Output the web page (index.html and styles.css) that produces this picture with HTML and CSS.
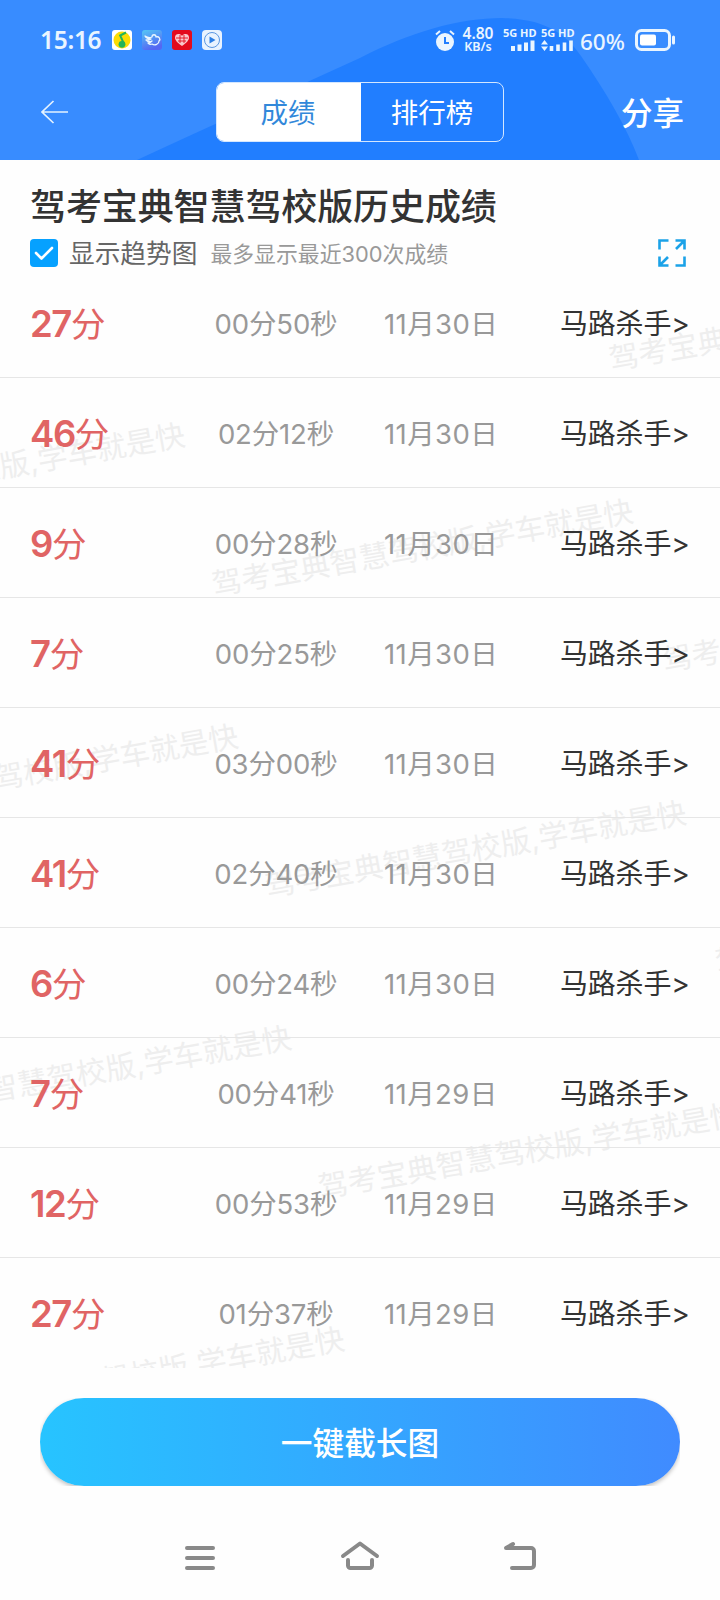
FILE: index.html
```html
<!DOCTYPE html>
<html lang="zh-CN">
<head>
<meta charset="utf-8">
<title>历史成绩</title>
<link rel="stylesheet" href="styles.css">
</head>
<body>
<header class="header">
  <svg class="header-bg" width="720" height="160" viewBox="0 0 720 160"><path d="M137 160 C215 124 290 90 360 58 C410 32 460 18 502 18 C546 19 566 34 581 56 C606 92 627 128 639 160Z" fill="#217eff"/></svg>
  <div class="status">
    <span class="clock">15:16</span>
    <div class="apps">
      <svg width="20" height="20" viewBox="0 0 20 20"><rect width="20" height="20" rx="3" fill="#fff"/><circle cx="10" cy="10" r="8.500" fill="#fbdc05"/><circle cx="10" cy="14.300" r="3.400" fill="#22b45a"/><path d="M12 14 8.200 5.500 14 2.500" fill="none" stroke="#22b45a" stroke-width="2"/></svg>
      <svg width="20" height="20" viewBox="0 0 20 20"><defs><linearGradient id="sky" x1="0" y1="0" x2=".4" y2="1"><stop stop-color="#55c7f5"/><stop offset="1" stop-color="#5467f3"/></linearGradient></defs><rect width="20" height="20" rx="3" fill="url(#sky)"/><path d="M3 6c3 2 5 2 7 1 0-3 4-3 4 0 3-1 5 2 3 4 0 3-4 5-7 3-2 1-3 0-4-1 2 0 3-1 4-2-2 1-4 1-6-1 2 0 4 0 5-1-3 0-5-1-6-3Z" fill="none" stroke="#e9f5ff" stroke-width="1.300" stroke-linejoin="round"/></svg>
      <svg width="20" height="20" viewBox="0 0 20 20"><rect width="20" height="20" rx="3" fill="#e30b1c"/><path d="M10 16C5 12.500 3 10 3 7.500 3 3.500 8 3 10 6c2-3 7-2.500 7 1.500 0 2.500-2 5-7 8.500Z" fill="#f9c9cc"/><path d="M4 8h12M6 11h8M8 5v8M12 5v8" stroke="#e30b1c" stroke-width=".9"/></svg>
      <svg width="20" height="20" viewBox="0 0 20 20"><rect width="20" height="20" rx="4" fill="#e9f3ff"/><circle cx="10" cy="10" r="7.500" fill="none" stroke="#5b97e2" stroke-width="1"/><path d="M7.500 6.500v7l6-3.500z" fill="#2d7fe6"/></svg>
    </div>
    <svg class="alarm" width="20" height="22" viewBox="0 0 20 22"><circle cx="10" cy="12" r="9" fill="#eaf5ff"/><path d="M1 4.500 5 1M19 4.500 15 1" stroke="#eaf5ff" stroke-width="2"/><path d="M10 7v6h4" fill="none" stroke="#217eff" stroke-width="2"/></svg>
    <div class="speed"><span>4.80</span><span class="unit">KB/s</span></div>
    <div class="net"><span>5G HD</span><svg width="32" height="11" viewBox="0 0 32 11"><path d="M10 11V6M16.500 11V4.500M23 11V2.500M29.500 11V.5" stroke="#eaf5ff" stroke-width="4"/></svg></div>
    <div class="net net2"><span>5G HD</span><svg width="32" height="11" viewBox="0 0 32 11"><path d="M0 4.500 3.500 0 7 4.500zM0 6.500 3.500 11 7 6.500z" fill="#eaf5ff"/><path d="M10.500 11V6M17 11V4.500M23.500 11V2.500M30 11V.5" stroke="#eaf5ff" stroke-width="3.600"/></svg></div>
    <span class="percent">60%</span>
    <svg class="battery" width="41" height="22" viewBox="0 0 41 22"><rect x="1.500" y="1.500" width="33" height="19" rx="5" fill="none" stroke="#eaf5ff" stroke-width="3"/><rect x="5" y="5.500" width="16" height="11" rx="2" fill="#fff"/><path d="M38.500 8v6" stroke="#eaf5ff" stroke-width="3" stroke-linecap="round"/></svg>
  </div>
  <div class="navbar">
    <svg class="back" width="28" height="24" viewBox="0 0 28 24"><path d="M12.500 1 1 12l11.500 11M1 12h26" fill="none" stroke="#e4f2ff" stroke-width="1.700"/></svg>
    <div class="tabs"><span class="tab active">成绩</span><span class="tab">排行榜</span></div>
    <span class="share">分享</span>
  </div>
</header>
<section class="intro">
  <h1>驾考宝典智慧驾校版历史成绩</h1>
  <div class="options">
    <svg class="check" width="28" height="28" viewBox="0 0 28 28"><rect width="28" height="28" rx="4" fill="#06a1ff"/><path d="m6 14 5.500 5.500L22 9" fill="none" stroke="#fff" stroke-width="2.600" stroke-linecap="round" stroke-linejoin="round"/></svg>
    <span class="trend">显示趋势图</span>
    <span class="hint">最多显示最近300次成绩</span>
    <svg class="expand" width="28" height="28" viewBox="0 0 28 28"><path d="M1.500 10.500V1.500h9M17.500 1.500h9v9M26 2 18 10M26.500 17.500v9h-9M1.500 17.500v9h9M2 26l8-8" fill="none" stroke="#1ba2e8" stroke-width="2.600"/></svg>
  </div>
</section>
<main class="list">
  <div class="marks">
    <span class="mark" style="left:430px;top:-153px">驾考宝典智慧驾校版,学车就是快</span>
    <span class="mark" style="left:-428px;top:-153px">驾考宝典智慧驾校版,学车就是快</span>
    <span class="mark" style="left:0;top:0">驾考宝典智慧驾校版,学车就是快</span>
    <span class="mark" style="left:430px;top:153px">驾考宝典智慧驾校版,学车就是快</span>
    <span class="mark" style="left:-428px;top:153px">驾考宝典智慧驾校版,学车就是快</span>
    <span class="mark" style="left:0;top:306px">驾考宝典智慧驾校版,学车就是快</span>
    <span class="mark" style="left:430px;top:459px">驾考宝典智慧驾校版,学车就是快</span>
    <span class="mark" style="left:-428px;top:459px">驾考宝典智慧驾校版,学车就是快</span>
    <span class="mark" style="left:0;top:612px">驾考宝典智慧驾校版,学车就是快</span>
    <span class="mark" style="left:-428px;top:765px">驾考宝典智慧驾校版,学车就是快</span>
  </div>
  <div class="row"><b>27<i>分</i></b><span class="time">00分50秒</span><span class="date">11月30日</span><span class="rank">马路杀手&gt;</span></div>
  <div class="row"><b>46<i>分</i></b><span class="time">02分12秒</span><span class="date">11月30日</span><span class="rank">马路杀手&gt;</span></div>
  <div class="row"><b>9<i>分</i></b><span class="time">00分28秒</span><span class="date">11月30日</span><span class="rank">马路杀手&gt;</span></div>
  <div class="row"><b>7<i>分</i></b><span class="time">00分25秒</span><span class="date">11月30日</span><span class="rank">马路杀手&gt;</span></div>
  <div class="row"><b>41<i>分</i></b><span class="time">03分00秒</span><span class="date">11月30日</span><span class="rank">马路杀手&gt;</span></div>
  <div class="row"><b>41<i>分</i></b><span class="time">02分40秒</span><span class="date">11月30日</span><span class="rank">马路杀手&gt;</span></div>
  <div class="row"><b>6<i>分</i></b><span class="time">00分24秒</span><span class="date">11月30日</span><span class="rank">马路杀手&gt;</span></div>
  <div class="row"><b>7<i>分</i></b><span class="time">00分41秒</span><span class="date">11月29日</span><span class="rank">马路杀手&gt;</span></div>
  <div class="row"><b>12<i>分</i></b><span class="time">00分53秒</span><span class="date">11月29日</span><span class="rank">马路杀手&gt;</span></div>
  <div class="row"><b>27<i>分</i></b><span class="time">01分37秒</span><span class="date">11月29日</span><span class="rank">马路杀手&gt;</span></div>
</main>
<div class="action"><div class="button">一键截长图</div></div>
<nav class="sysnav">
  <svg width="40" height="32" viewBox="0 0 40 32"><path d="M7 8h26M7 18h26M7 28h26" stroke="#898989" stroke-width="4" stroke-linecap="round"/></svg>
  <svg width="40" height="32" viewBox="0 0 40 32"><path d="M3 16 20 3.500 37 16M8 20v5.500a2.500 2.500 0 0 0 2.500 2.500h19a2.500 2.500 0 0 0 2.500-2.500V20" fill="none" stroke="#898989" stroke-width="4" stroke-linecap="round" stroke-linejoin="round"/></svg>
  <svg width="40" height="32" viewBox="0 0 40 32"><path d="M12 28h19a3 3 0 0 0 3-3V11a3 3 0 0 0-3-3H6l7-4" fill="none" stroke="#898989" stroke-width="4" stroke-linecap="round" stroke-linejoin="round"/></svg>
</nav>
</body>
</html>
```
FILE: styles.css
```css
* { box-sizing: border-box; }
body { margin: 0; width: 720px; height: 1600px; overflow: hidden; background: #fefefe; color: #333; font-family: Inter, "Noto Sans CJK SC", sans-serif; display: flex; flex-direction: column; }
svg { display: block; flex: none; }
span { white-space: nowrap; }
.header { position: relative; height: 160px; flex: none; background: #388cff; color: #eaf5ff; }
.header-bg { position: absolute; left: 0; top: 0; }
.status { position: relative; height: 82px; padding: 0 0 0 40px; display: flex; align-items: center; }
.clock { width: 72px; margin-top: -3px; font: 600 24.500px/30px "Noto Sans", sans-serif; letter-spacing: -.3px; }
.apps { display: flex; gap: 10px; width: 323px; margin-top: -2px; }
.speed { width: 34px; margin: -3px 0 0 6px; display: flex; flex-direction: column; align-items: center; font: 600 15.500px/13px "Noto Sans", sans-serif; }
.unit { font-size: 12.500px; line-height: 13px; }
.net { width: 32px; margin: -5px 0 0 8px; display: flex; flex-direction: column; gap: 2px; font: 700 11px/11px "Noto Sans", sans-serif; }
.net2 { margin-left: 6px; }
.percent { width: 46px; margin: 1px 0 0 7px; font: 500 22.500px/30px "Noto Sans", sans-serif; }
.battery { margin: -2px 0 0 9px; }
.navbar { position: relative; display: flex; align-items: center; height: 60px; padding-left: 41px; }
.tabs { display: flex; width: 288px; height: 60px; margin-left: 147px; border: 1px solid #d4e7ff; border-radius: 8px; overflow: hidden; }
.tab { width: 142px; text-align: center; font-size: 27.500px; line-height: 60px; color: #fff; }
.tab.active { width: 144px; padding-right: 2px; background: #fff; color: #3288da; }
.share { margin: 3px 0 0 117px; font-size: 31.500px; font-weight: 500; line-height: 60px; color: #fff; }
.intro { height: 108px; flex: none; padding: 23px 34px 0 30px; }
h1 { margin: 0; font-size: 36px; line-height: 48px; font-weight: 500; letter-spacing: -.1px; white-space: nowrap; }
.options { display: flex; align-items: center; height: 46px; margin-top: -1px; }
.trend { margin: -3px 0 0 11px; font-size: 25.700px; color: #666; }
.hint { margin: -1px 0 0 13px; font-size: 21.850px; color: #999; }
.expand { margin-left: auto; }
.list { position: relative; height: 1100px; flex: none; overflow: hidden; }
.marks { position: absolute; left: 209px; top: 299px; width: 0; height: 0; transform: rotate(-10deg); transform-origin: 0 0; }
.mark { position: absolute; width: 440px; font-size: 29.900px; line-height: 36px; color: #eee; }
.row { position: relative; height: 110px; display: grid; grid-template-columns: 178px 136px 1fr 132px; align-items: center; padding: 0 28px 2px 30px; border-bottom: 1px solid #e6e6e6; font-size: 27.500px; color: #999; }
.row:last-child { border-bottom: 0; }
.row b { padding-top: 5px; font-size: 36.500px; font-weight: 600; letter-spacing: -1.400px; color: #e06464; line-height: 50px; }
.row i { font-style: normal; font-weight: 400; font-size: 34.500px; }
.time { text-align: center; letter-spacing: -.15px; }
.date { padding-left: 40px; letter-spacing: .4px; }
.rank { color: #333; font-size: 28px; letter-spacing: -.2px; }
.action { padding: 30px 40px 0; flex: none; }
.button { height: 88px; border-radius: 44px; background: linear-gradient(90deg, #27c4ff, #408bff); color: #fff; font-size: 31.700px; font-weight: 500; line-height: 92px; text-align: center; box-shadow: 0 2px 4px rgba(0,0,0,.25); clip-path: inset(0); }
.sysnav { display: flex; gap: 120px; padding: 54px 0 0 180px; }
```
